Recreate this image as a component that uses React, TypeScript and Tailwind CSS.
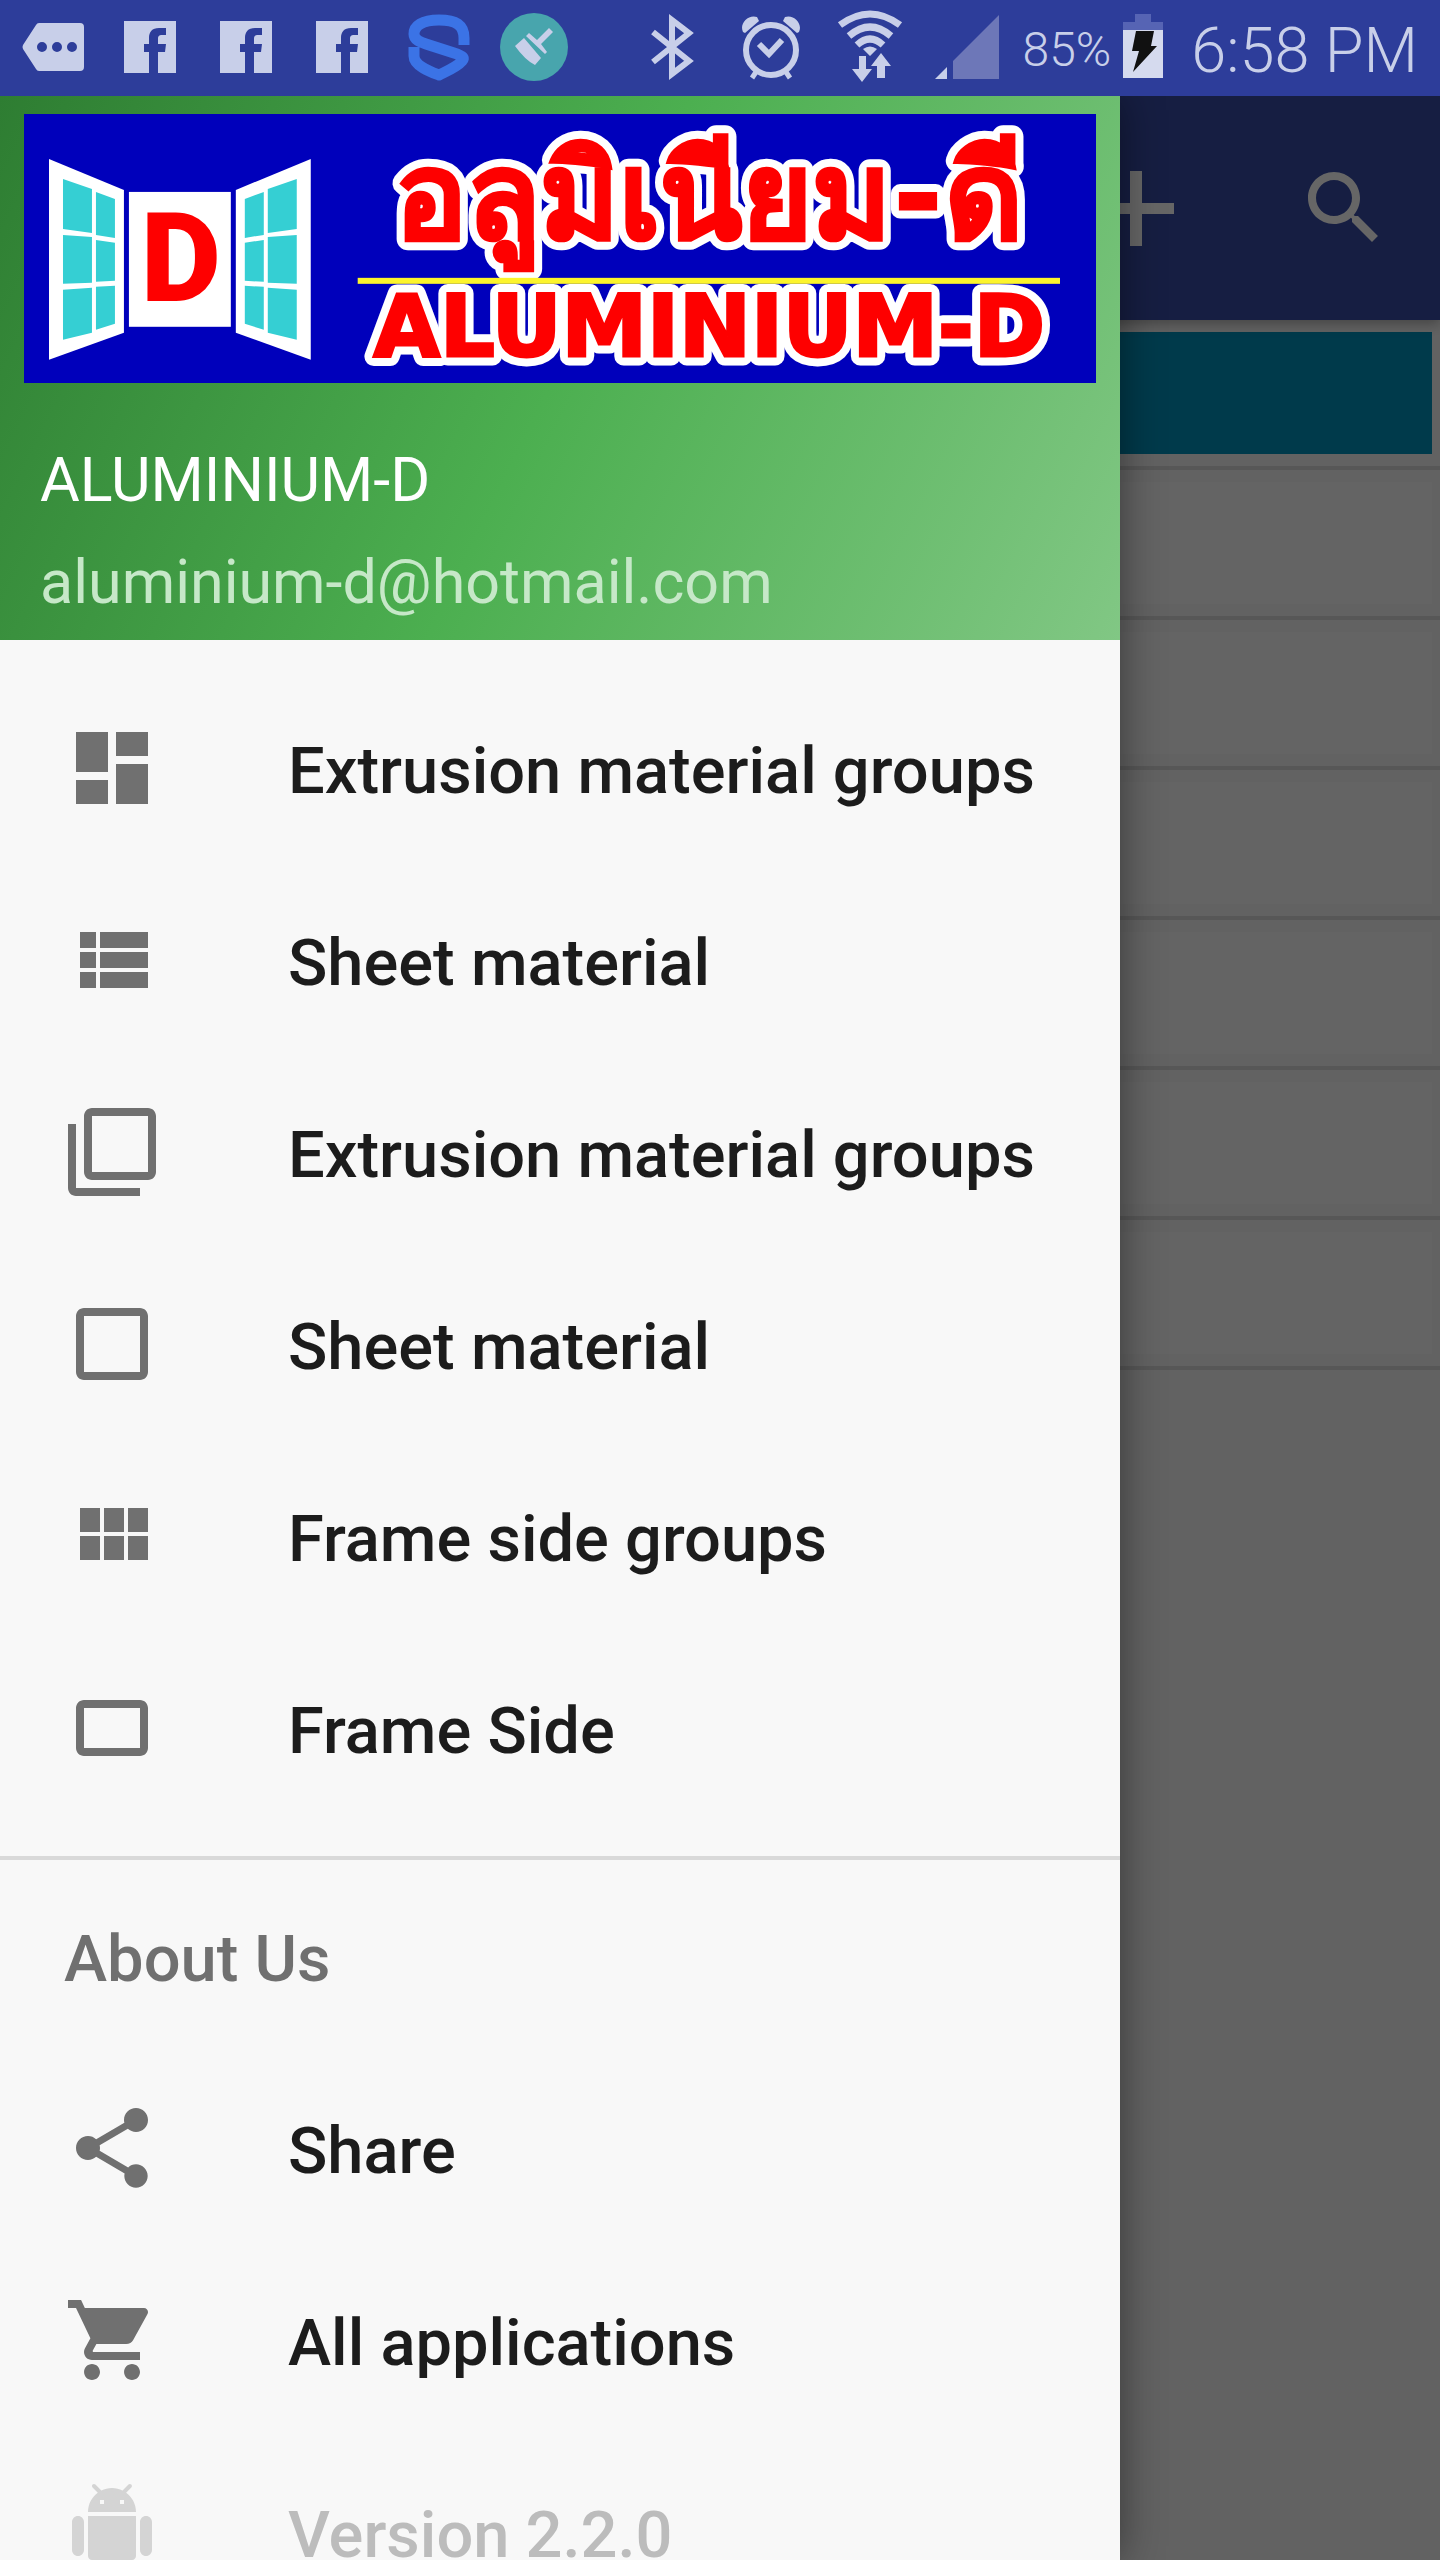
import type { ReactNode } from "react";

type MenuItem = { label: string; icon: string; disabled?: boolean };

const materialItems: MenuItem[] = [
  {
    label: "Extrusion material groups",
    icon: "M3 13h8V3H3v10zm0 8h8v-6H3v6zm10 0h8V11h-8v10zm0-18v6h8V3h-8z",
  },
  {
    label: "Sheet material",
    icon: "M4 14h4v-4H4v4zm0 5h4v-4H4v4zM4 9h4V5H4v4zm5 5h12v-4H9v4zm0 5h12v-4H9v4zM9 5v4h12V5H9z",
  },
  {
    label: "Extrusion material groups",
    icon: "M3 5H1v16c0 1.1.9 2 2 2h16v-2H3V5zm18-4H7c-1.1 0-2 .9-2 2v14c0 1.1.9 2 2 2h14c1.1 0 2-.9 2-2V3c0-1.1-.9-2-2-2zm0 16H7V3h14v14z",
  },
  {
    label: "Sheet material",
    icon: "M19 3H5c-1.1 0-2 .9-2 2v14c0 1.1.9 2 2 2h14c1.1 0 2-.9 2-2V5c0-1.1-.9-2-2-2zm0 16H5V5h14v14z",
  },
  {
    label: "Frame side groups",
    icon: "M4 11h5V5H4v6zm0 7h5v-6H4v6zm6 0h5v-6h-5v6zm6 0h5v-6h-5v6zm-6-7h5V5h-5v6zm6-6v6h5V5h-5z",
  },
  {
    label: "Frame Side",
    icon: "M19 5H5c-1.1 0-2 .9-2 2v10c0 1.1.9 2 2 2h14c1.1 0 2-.9 2-2V7c0-1.1-.9-2-2-2zm0 12H5V7h14v10z",
  },
];

const aboutItems: MenuItem[] = [
  {
    label: "Share",
    icon: "M18 16.08c-.76 0-1.44.3-1.96.77L8.91 12.7c.05-.23.09-.46.09-.7s-.04-.47-.09-.7l7.05-4.11c.54.5 1.25.81 2.04.81 1.66 0 3-1.34 3-3s-1.34-3-3-3-3 1.34-3 3c0 .24.04.47.09.7L8.04 9.81C7.5 9.31 6.79 9 6 9c-1.66 0-3 1.34-3 3s1.34 3 3 3c.79 0 1.5-.31 2.04-.81l7.12 4.16c-.05.21-.08.43-.08.65 0 1.61 1.31 2.92 2.92 2.92s2.92-1.31 2.92-2.92-1.31-2.92-2.92-2.92z",
  },
  {
    label: "All applications",
    icon: "M7 18c-1.1 0-1.99.9-1.99 2S5.9 22 7 22s2-.9 2-2-.9-2-2-2zM1 2v2h2l3.6 7.59-1.35 2.45c-.16.28-.25.61-.25.96 0 1.1.9 2 2 2h12v-2H7.42c-.14 0-.25-.11-.25-.25l.03-.12.9-1.63h7.45c.75 0 1.41-.41 1.75-1.03l3.58-6.49c.08-.14.12-.31.12-.48 0-.55-.45-1-1-1H5.21l-.94-2H1zm16 16c-1.1 0-1.99.9-1.99 2s.89 2 1.99 2 2-.9 2-2-.9-2-2-2z",
  },
  {
    label: "Version 2.2.0",
    disabled: true,
    icon: "M6 18c0 .55.45 1 1 1h1v3.5c0 .83.67 1.5 1.5 1.5s1.5-.67 1.5-1.5V19h2v3.5c0 .83.67 1.5 1.5 1.5s1.5-.67 1.5-1.5V19h1c.55 0 1-.45 1-1V8H6v10zM3.5 8C2.67 8 2 8.67 2 9.5v7c0 .83.67 1.5 1.5 1.5S5 17.33 5 16.5v-7C5 8.67 4.33 8 3.5 8zm17 0c-.83 0-1.5.67-1.5 1.5v7c0 .83.67 1.5 1.5 1.5s1.5-.67 1.5-1.5v-7c0-.83-.67-1.5-1.5-1.5zm-4.97-5.84l1.3-1.3c.2-.2.2-.51 0-.71-.2-.2-.51-.2-.71 0l-1.48 1.48C13.85 1.23 12.95 1 12 1c-.96 0-1.86.23-2.66.63L7.85.15c-.2-.2-.51-.2-.71 0-.2.2-.2.51 0 .71l1.31 1.31C6.97 3.26 6 5.01 6 7h12c0-1.99-.97-3.75-2.47-4.84zM10 5H9V4h1v1zm5 0h-1V4h1v1z",
  },
];

function StatusIcon({ width, className = "", children }: { width: number; className?: string; children: ReactNode }) {
  return (
    <svg
      width={width}
      height={96}
      viewBox={`0 0 ${width} 96`}
      className={`shrink-0 fill-[#c8cfe9] ${className}`}
      aria-hidden="true"
    >
      {children}
    </svg>
  );
}

function FacebookIcon() {
  return (
    <StatusIcon width={52}>
      <path d="M0 21h52v52H34V52h7l1-8h-8v-5c0-3 1-4 4-4h4v-7h-7c-7 0-10 4-10 10v6h-5v8h5v21H0z" />
    </StatusIcon>
  );
}

function StatusBar() {
  return (
    <header className="flex h-24 items-center justify-between bg-[#2d3d9a] px-[22px] text-[#c8cfe9]">
      <div className="flex items-center gap-10">
        <StatusIcon width={62}>
          <path
            fillRule="evenodd"
            d="M17 23h41a4 4 0 0 1 4 4v40a4 4 0 0 1-4 4H17q-2 0-3-2L1 49q-1-2 0-4l13-20q1-2 3-2zM20 42a5 5 0 1 0 0 10a5 5 0 0 0 0-10zm15 0a5 5 0 1 0 0 10a5 5 0 0 0 0-10zm15 0a5 5 0 1 0 0 10a5 5 0 0 0 0-10z"
          />
        </StatusIcon>
        <div className="flex items-center gap-11">
          <FacebookIcon />
          <FacebookIcon />
          <FacebookIcon />
        </div>
        <div className="flex items-center gap-[30px]">
          <StatusIcon width={62}>
            <path
              d="M56 45V38C56 25 48 20 31 20S6 26 6 34c0 6 6 8 12 10l28 9c9 3 11 5 8 8C49 67 39 71 31 75 23 72 6 66 6 56V47"
              fill="none"
              stroke="#3b73e6"
              strokeWidth="11"
              strokeLinejoin="round"
            />
          </StatusIcon>
          <StatusIcon width={68}>
            <circle cx="34" cy="47" r="34" fill="#48a5ad" />
            <path d="M15 46L24 38 41 58 35 65Q25 60 15 46zM26 36l3-3 8 7 12-12 4 4-12 12 6 8-2 2z" />
          </StatusIcon>
        </div>
      </div>

      <div className="flex items-center">
        <StatusIcon width={46}>
          <path d="M2 32L38 61 21 74V20L38 33 2 62" fill="none" stroke="#c8cfe9" strokeWidth="6" />
        </StatusIcon>
        <StatusIcon width={60} className="ml-11">
          <g fill="none" stroke="#c8cfe9">
            <circle cx="30" cy="50" r="25" strokeWidth="6" />
            <path d="M18 44l10 10 13-14" strokeWidth="6" />
            <path d="M15 72l-4 6M45 72l4 6" strokeWidth="5" />
          </g>
          <path d="M2 32c-4-8 5-18 14-15l2 4L4 33zM58 32c4-8-5-18-14-15l-2 4 14 12z" />
        </StatusIcon>
        <StatusIcon width={66} className="ml-9">
          <g fill="none" stroke="#c8cfe9" strokeWidth="7">
            <path d="M3 25q30-22 60 0" />
            <path d="M12 36q21-18 42 0" />
            <path d="M20 45q13-12 26 0" />
          </g>
          <path d="M33 56l-7-7q7-5 14 0zM22 56h7v13h6L25 82 15 69h7zM44 53l10 13h-6v12h-8V66h-6z" />
        </StatusIcon>
        <StatusIcon width={64} className="ml-8">
          <path d="M0 79l12-12v12z" />
          <path d="M18 79V61l46-46v64z" className="fill-[#6d77b8]" />
        </StatusIcon>
        <span className="ml-6 pt-1 text-5xl leading-none font-light">85%</span>
        <StatusIcon width={40} className="ml-3">
          <path d="M12 14h16v8h12v8H0v-8h12z" className="fill-[#5664b4]" />
          <path d="M0 30h40v48H0z" className="fill-[#d5daee]" />
          <path d="M13 31h18l-3 15h6L10 72l6-21H9z" className="fill-[#111]" />
        </StatusIcon>
        <span className="ml-7 pt-1 text-[63px] leading-none font-light">6:58 PM</span>
      </div>
    </header>
  );
}

function WindowSash() {
  return (
    <>
      <path d="M25 45L100 76V219L25 246z" fill="#fff" />
      <path
        d="M39 65l29 10v44l-29-4zM72 78l19 7v39l-19-3zM39 121l29 2v46l-29 1zM72 126l19 3v38l-19 1zM39 176l29-2v45l-29 7zM72 173l19-1v38l-19 6z"
        fill="#35cfd3"
      />
    </>
  );
}

function Logo() {
  return (
    <svg viewBox="0 0 1073 269" className="block h-auto w-full bg-[#0000bb]" role="img" aria-label="Aluminium-D logo">
      <WindowSash />
      <g transform="translate(312 0) scale(-1 1)">
        <WindowSash />
      </g>
      <rect x="105" y="78" width="102" height="135" fill="#fff" />
      <text
        x="157"
        y="187"
        fontSize="124"
        fontWeight="900"
        textAnchor="middle"
        fill="#fe0000"
        className="font-['Roboto',sans-serif]"
      >
        D
      </text>
      {/* white halo behind the lettering */}
      <use href="#lettering" stroke="#fff" strokeWidth="19" strokeLinejoin="round" />
      <rect x="334" y="164" width="703" height="6" fill="#fcf42c" />
      <g stroke="#fe0000" strokeWidth="3">
        <g id="lettering" fill="#fe0000" fontWeight="900" textAnchor="middle">
          <text x="686" y="124" fontSize="120" className="font-['Roboto',sans-serif]">
            อลูมิเนียม-ดี
          </text>
          <text x="686" y="242" fontSize="86" className="font-['DejaVu_Sans',sans-serif]">
            ALUMINIUM-D
          </text>
        </g>
      </g>
    </svg>
  );
}

function MenuList({ items }: { items: MenuItem[] }) {
  return (
    <ul>
      {items.map((item, i) => (
        <li key={i}>
          <button
            type="button"
            disabled={item.disabled}
            className="flex h-48 w-full items-center gap-32 px-16 text-left text-[65px] font-medium whitespace-nowrap text-[#1c1c1c] disabled:text-[#bcbcbc]"
          >
            <svg
              viewBox="0 0 24 24"
              className={`size-24 shrink-0 ${item.disabled ? "fill-[#d4d4d4]" : "fill-[#707070]"}`}
              aria-hidden="true"
            >
              <path d={item.icon} />
            </svg>
            <span className="pt-2">{item.label}</span>
          </button>
        </li>
      ))}
    </ul>
  );
}

function Drawer() {
  return (
    <nav className="absolute inset-y-0 left-0 w-7/9 overflow-hidden bg-[#f8f8f8] shadow-[0_0_40px_rgba(0,0,0,0.45)]">
      <div className="flex h-[544px] flex-col bg-[linear-gradient(116deg,#2e7d32,#4caf50,#81c784)] px-6 pt-[18px]">
        <Logo />
        <div className="flex flex-col px-4 pt-[46px]">
          <span className="text-[61px] leading-[102px] text-white">ALUMINIUM-D</span>
          <a href="mailto:aluminium-d@hotmail.com" className="text-[61px] leading-[102px] text-[#c6e8c8]">
            aluminium-d@hotmail.com
          </a>
        </div>
      </div>
      <div className="py-8">
        <MenuList items={materialItems} />
      </div>
      <h2 className="flex h-[196px] items-center border-t-4 border-[#d9d9d9] px-16 pt-2 text-[65px] font-medium text-[#707070]">
        About Us
      </h2>
      <MenuList items={aboutItems} />
    </nav>
  );
}

function Content() {
  return (
    <div className="h-full bg-[#f5f5f5]">
      <div className="relative flex h-56 items-center justify-end gap-28 bg-[#394da5] px-12 shadow-[0_4px_12px_rgba(0,0,0,0.3)]">
        <button type="button" aria-label="Add">
          <svg viewBox="0 0 96 96" className="size-24 fill-white">
            <path d="M42 11h12v32h32v11H54v32H42V54H10V43h32z" />
          </svg>
        </button>
        <button type="button" aria-label="Search">
          <svg viewBox="0 0 24 24" className="size-24 fill-white">
            <path d="M15.5 14h-.79l-.28-.27C15.41 12.59 16 11.11 16 9.5 16 5.91 13.09 3 9.5 3S3 5.91 3 9.5 5.91 16 9.5 16c1.61 0 3.09-.59 4.23-1.57l.27.28v.79l5 4.99L20.49 19l-4.99-5zm-6 0C7.01 14 5 11.99 5 9.5S7.01 5 9.5 5 14 7.01 14 9.5 11.99 14 9.5 14z" />
          </svg>
        </button>
      </div>
      {[0, 1, 2, 3, 4, 5, 6].map((row) => (
        <div key={row} className="border-b-4 border-[#dadada] px-2 py-3">
          <div className={`h-[122px] ${row === 0 ? "bg-[#0091bc]" : "bg-[#fafafa]"}`} />
        </div>
      ))}
    </div>
  );
}

export default function App() {
  return (
    <div className="flex h-screen flex-col overflow-hidden font-['Roboto',sans-serif]">
      <StatusBar />
      <main className="relative min-h-0 flex-1 overflow-hidden">
        <Content />
        <div className="absolute inset-0 bg-black/60" />
        <Drawer />
      </main>
    </div>
  );
}
